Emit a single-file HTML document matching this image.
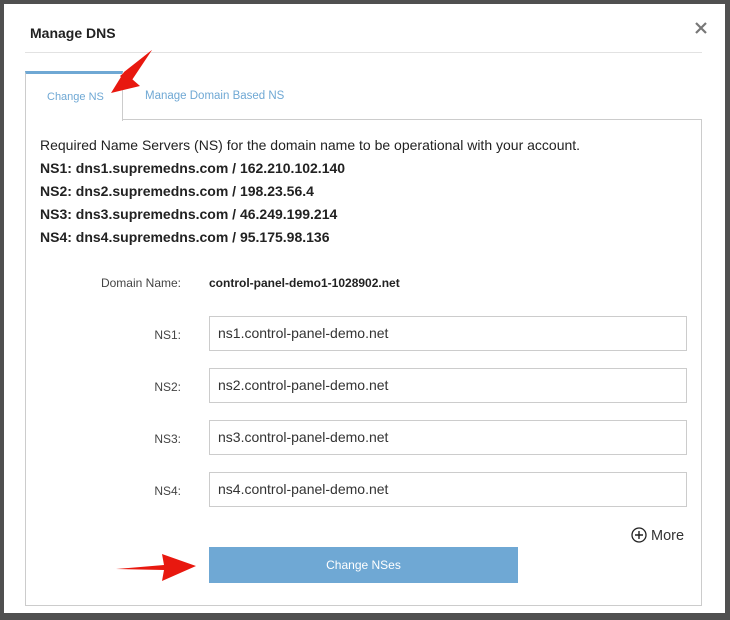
<!DOCTYPE html>
<html><head><style>
*{margin:0;padding:0;box-sizing:border-box}
body{width:730px;height:620px;background:#505050;font-family:"Liberation Sans",sans-serif;position:relative;overflow:hidden}
.m{position:absolute;left:4px;top:4px;width:721px;height:609px;background:#fff}
.a{position:absolute;white-space:nowrap}
.t{left:26px;top:21px;font-size:14px;font-weight:bold;color:#222}
.hr{left:21px;top:48px;width:677px;height:1px;background:#e2e2e2}
.panel{left:21px;top:115px;width:677px;height:487px;border:1px solid #ccc}
.tab1{left:21px;top:67px;width:98px;height:50px;background:#fff;border-left:1px solid #ccc;border-right:1px solid #ccc;border-top:3px solid #6fa8d4}
.tab2{left:118px;top:71px;width:580px;height:45px;border-bottom:1px solid #ccc}
.tl{font-size:11px;color:#6fa8d4}
.p{font-size:14px;color:#222}
.b{font-weight:bold}
.lbl{font-size:12px;color:#444;text-align:right;width:160px;left:17px}
.in{left:205px;width:478px;height:35px;border:1px solid #ccc;font-size:14px;color:#333;padding:8px 8px}
.btn{left:205px;top:543px;width:309px;height:36px;background:#6fa8d4;color:#fff;font-size:12px;text-align:center;line-height:36px}
</style></head><body>
<div class="m">
<div class="a t">Manage DNS</div>
<svg class="a" style="left:691px;top:18px" width="12" height="12" viewBox="0 0 12 12"><path d="M1 1L11 11M11 1L1 11" stroke="#777" stroke-width="2.2"/></svg>
<div class="a hr"></div>
<div class="a panel"></div>
<div class="a tab2"></div>
<div class="a tab1"></div>
<div class="a tl" style="left:43px;top:87px">Change NS</div>
<div class="a tl" style="left:141px;top:86px;font-size:11.5px">Manage Domain Based NS</div>
<div class="a p" style="left:36px;top:133px">Required Name Servers (NS) for the domain name to be operational with your account.</div>
<div class="a p b" style="left:36px;top:156px">NS1: dns1.supremedns.com / 162.210.102.140</div>
<div class="a p b" style="left:36px;top:179px">NS2: dns2.supremedns.com / 198.23.56.4</div>
<div class="a p b" style="left:36px;top:202px">NS3: dns3.supremedns.com / 46.249.199.214</div>
<div class="a p b" style="left:36px;top:225px">NS4: dns4.supremedns.com / 95.175.98.136</div>
<div class="a lbl" style="top:272px">Domain Name:</div>
<div class="a b" style="left:205px;top:272px;font-size:12px;color:#222">control-panel-demo1-1028902.net</div>
<div class="a lbl" style="top:324px">NS1:</div>
<div class="a in" style="top:312px">ns1.control-panel-demo.net</div>
<div class="a lbl" style="top:376px">NS2:</div>
<div class="a in" style="top:364px">ns2.control-panel-demo.net</div>
<div class="a lbl" style="top:428px">NS3:</div>
<div class="a in" style="top:416px">ns3.control-panel-demo.net</div>
<div class="a lbl" style="top:480px">NS4:</div>
<div class="a in" style="top:468px">ns4.control-panel-demo.net</div>
<div class="a" style="left:627px;top:523px;font-size:14.5px;color:#333"><svg width="16" height="16" viewBox="0 0 16 16" style="vertical-align:-3px"><circle cx="8" cy="8" r="7" fill="none" stroke="#222" stroke-width="1.3"/><path d="M8 4v8M4 8h8" stroke="#222" stroke-width="1.4"/></svg> More</div>
<div class="a btn">Change NSes</div>
</div>
<svg class="a" style="left:0;top:0" width="730" height="620">
<path d="M152 50 L124 72 L132 80 Z M124 72 L111 93 L140 86 Z" fill="#e8180f"/>
<path d="M152 50 L120 76 L126 82 Z" fill="#e8180f"/>
<path d="M116 569 L164 565 L162 554 L196 566 L162 581 L164 570 Z" fill="#e8180f"/>
</svg>
</body></html>
